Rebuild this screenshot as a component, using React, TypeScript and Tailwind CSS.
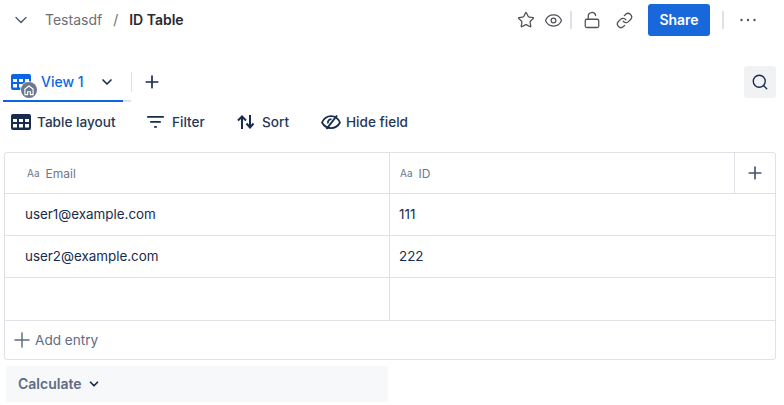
import { ChevronDown, Eye, Link, LockOpen, Plus, Search, Star } from "lucide-react";

function TableIcon({ className }: { className: string }) {
  return (
    <svg viewBox="0 0 20 16" className={className}>
      <path
        fill="currentColor"
        fillRule="evenodd"
        d="M2 0h16a2 2 0 0 1 2 2v12a2 2 0 0 1-2 2H2a2 2 0 0 1-2-2V2a2 2 0 0 1 2-2Zm0 5v3h4V5H2Zm6 0v3h4V5H8Zm6 0v3h4V5h-4ZM2 10v3.500h4V10H2Zm6 0v3.500h4V10H8Zm6 0v3.500h4V10h-4Z"
      />
    </svg>
  );
}

function HomeBadge() {
  return (
    <span className="absolute left-[10px] top-[8px] flex h-4 w-4 items-center justify-center rounded-full bg-[#6b778c] ring-1 ring-white/70">
      <svg viewBox="0 0 12 12" className="h-[14px] w-[14px] text-white" fill="none" stroke="currentColor" strokeWidth="1">
        <path d="M2.500 10V5.200L6 2.500l3.500 2.700V10H7.200V7.500H4.800V10Z" />
      </svg>
    </span>
  );
}

function FilterIcon() {
  return (
    <svg viewBox="0 0 18 12" className="h-3 w-[18px] text-[#172b4d]" fill="currentColor">
      <rect x="0" y="0" width="17" height="1.800" rx="0.900" />
      <rect x="3" y="5" width="11" height="1.800" rx="0.900" />
      <rect x="7" y="10" width="3" height="1.800" rx="0.900" />
    </svg>
  );
}

function SortIcon() {
  return (
    <svg viewBox="0 0 18 14" className="h-[14px] w-[18px] text-[#172b4d]" fill="none" stroke="currentColor" strokeWidth="2">
      <path d="M5 14V1.500M1 5.500l4-4 4 4M13 0v12.500M9.500 8.500l3.500 4 3.500-4" />
    </svg>
  );
}

function HideIcon() {
  return (
    <svg viewBox="0 0 20 18" className="mr-[5px] h-[18px] w-5 text-[#172b4d]" fill="none" stroke="currentColor" strokeWidth="1.700">
      <path d="M1 9.500C3 5.200 6 3.200 10 3.200s7 2 9 6.300c-2 3.800-5 5.600-9 5.600s-7-1.800-9-5.600Z" />
      <path d="M7 10.500C6.500 8 8 6.200 10.500 6.200" />
      <path d="M16 2.500 5.500 16" strokeWidth="2" />
    </svg>
  );
}

function DotsIcon() {
  return (
    <svg viewBox="0 0 16 4" className="h-1 w-4 text-[#505258]" fill="currentColor">
      <circle cx="1.500" cy="2" r="1.200" />
      <circle cx="8" cy="2" r="1.200" />
      <circle cx="14.500" cy="2" r="1.200" />
    </svg>
  );
}

function ToolbarItem({ icon, label, className }: { icon: React.ReactNode; label: string; className: string }) {
  return (
    <div className={`flex items-center ${className}`}>
      {icon}
      <span>{label}</span>
    </div>
  );
}

function ColumnHead({ label, className }: { label: string; className: string }) {
  return (
    <div className={`flex items-center pt-[2px] text-xs text-[#6b778c] ${className}`}>
      <span className="mr-[6px] mb-[2px] text-[10px] leading-none text-[#6b778c]">Aa</span>
      <span>{label}</span>
    </div>
  );
}

function Row({ left, right, className }: { left: string; right: string; className: string }) {
  return (
    <div className={`flex border-t border-[#dfe1e6] text-[13.4px] text-[#172b4d] ${className}`}>
      <div className="flex w-[385px] items-center border-r border-[#dfe1e6] pl-5">{left}</div>
      <div className="flex items-center pl-[9px]">{right}</div>
    </div>
  );
}

export default function App() {
  return (
    <div className="h-[405px] w-[784px] overflow-hidden bg-white font-['Inter',sans-serif]">
      <header className="flex h-10 items-center pl-[11px] pr-[28px]">
        <ChevronDown className="h-5 w-5 text-[#44546f]" strokeWidth={1.5} />
        <span className="ml-[14px] text-sm text-[#6b6e76]">Testasdf</span>
        <span className="ml-[11px] text-sm text-[#6b6e76]">/</span>
        <span className="ml-[11px] text-sm font-semibold text-[#292a2e]">ID Table</span>
        <div className="ml-auto flex items-center">
          <Star className="h-[18px] w-[18px] text-[#505258]" strokeWidth={1.7} />
          <Eye className="ml-[9px] h-[19px] w-[19px] text-[#505258]" strokeWidth={1.6} />
          <span className="ml-[7px] h-[18px] w-0.5 bg-[#dfe1e6]" />
          <LockOpen className="ml-[11px] h-[18px] w-[18px] text-[#505258]" strokeWidth={1.7} />
          <Link className="ml-[15px] h-[17px] w-[17px] text-[#505258]" strokeWidth={1.8} />
          <button className="ml-[15px] h-8 w-[62px] rounded-[3px] bg-[#1868db] text-sm font-semibold text-white">Share</button>
          <span className="ml-3 h-[18px] w-0.5 bg-[#dfe1e6]" />
          <span className="ml-4 flex"><DotsIcon /></span>
        </div>
      </header>

      <div className="mt-[26px] flex h-9 items-start pl-[3px] pr-2">
        <div className="relative flex h-9 w-[128px] items-start border-b-2 border-[#dfe1e6]">
          <div className="absolute bottom-[-2px] left-0 h-0.5 w-[120px] bg-[#0c66e4]" />
          <div className="relative ml-2 mt-[8px] h-4 w-5">
            <TableIcon className="h-[16px] w-5 text-[#0c66e4]" />
            <HomeBadge />
          </div>
          <span className="ml-[10px] mt-[6px] text-sm font-medium text-[#0c66e4]">View 1</span>
          <ChevronDown className="ml-[15px] mt-[8px] h-4 w-4 text-[#172b4d]" strokeWidth={2.5} />
        </div>
        <span className="mt-[6px] h-5 w-px bg-[#dfe1e6]" />
        <Plus className="ml-[10px] mt-[6px] h-5 w-5 text-[#172b4d]" strokeWidth={2} />
        <div className="ml-auto flex h-8 w-8 items-center justify-center self-start rounded-[3px] bg-[#f1f2f4]">
          <Search className="h-[18px] w-[18px] text-[#172b4d]" strokeWidth={1.8} />
        </div>
      </div>

      <div className="flex h-[40px] items-center pl-[11px] pt-[1px] text-[13.6px] font-medium text-[#253858]">
        <ToolbarItem icon={<TableIcon className="mr-[6px] h-4 w-5 text-[#172b4d]" />} label="Table layout" className="w-[136px]" />
        <ToolbarItem icon={<span className="mr-[7px] flex"><FilterIcon /></span>} label="Filter" className="w-[90px]" />
        <ToolbarItem icon={<span className="mr-[7px] flex"><SortIcon /></span>} label="Sort" className="w-[84px]" />
        <ToolbarItem icon={<HideIcon />} label="Hide field" className="" />
      </div>

      <div className="mx-1 mt-[10px] w-[772px] rounded-[3px] border border-[#dfe1e6]">
        <div className="flex h-10">
          <ColumnHead label="Email" className="w-[385px] border-r border-[#dfe1e6] pl-[22px]" />
          <ColumnHead label="ID" className="w-[345px] border-r border-[#dfe1e6] pl-[10px]" />
          <div className="flex flex-1 items-center justify-center pr-px">
            <Plus className="h-5 w-5 text-[#44546f]" strokeWidth={2} />
          </div>
        </div>
        <Row left="user1@example.com" right="111" className="h-[42px]" />
        <Row left="user2@example.com" right="222" className="h-[42px]" />
        <Row left="" right="" className="h-[43px]" />
        <div className="flex h-[39px] items-center border-t border-[#dfe1e6] pl-[5px] text-[13.6px] text-[#5e6c84]">
          <Plus className="mr-px h-6 w-6" strokeWidth={1.5} />
          <span>Add entry</span>
        </div>
      </div>

      <div className="ml-[6px] mt-[6px] flex h-9 w-[382px] items-center rounded-[3px] bg-[#f7f8f9] pl-3 text-sm font-semibold text-[#5e6c84]">
        <span>Calculate</span>
        <ChevronDown className="ml-[5px] h-[14px] w-[14px] text-[#172b4d]" strokeWidth={3} />
      </div>
    </div>
  );
}
